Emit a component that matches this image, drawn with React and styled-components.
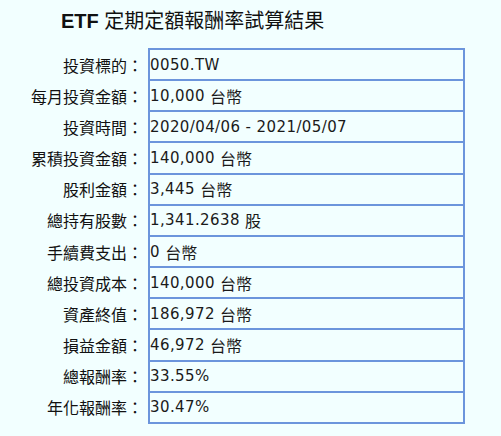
import React from "react";
import styled, { createGlobalStyle } from "styled-components";

const GlobalStyle = createGlobalStyle`
  body {
    margin: 0;
    background: #f2ffff;
    font-family: "DejaVu Sans", "Noto Sans CJK TC", sans-serif;
  }
`;

const Page = styled.div`
  width: 501px;
  height: 436px;
  background: #f2ffff;
  overflow: hidden;
`;

const Title = styled.h1`
  margin: 0;
  padding: 10px 0 0 61px;
  height: 48px;
  box-sizing: border-box;
  font-family: "Liberation Sans", "Noto Sans CJK TC", sans-serif;
  font-size: 20px;
  line-height: 22px;
  font-weight: normal;
  color: #111;

  & b {
    font-weight: bold;
  }
`;

const Rows = styled.div`
  display: flex;
  flex-direction: column;
`;

const Row = styled.div`
  display: grid;
  grid-template-columns: 148px 317px;
  align-items: stretch;
  height: 33.17px;
  & + & {
    margin-top: -2px;
  }
`;

const Label = styled.div`
  display: flex;
  align-items: center;
  justify-content: flex-end;
  padding-right: 5px;
  font-family: "Noto Sans CJK TC", sans-serif;
  font-size: 16px;
  color: #111;
  white-space: nowrap;
`;

const Value = styled.div`
  display: flex;
  align-items: center;
  box-sizing: border-box;
  border: 2px solid #6c95dc;
  padding-left: 0;
  font-family: "DejaVu Sans", "Noto Sans CJK TC", sans-serif;
  font-size: 15px;
  letter-spacing: 0.4px;
  color: #1a1a1a;
  white-space: nowrap;
`;

const Unit = styled.span`
  font-family: "Noto Sans CJK TC", sans-serif;
  font-size: 16px;
  letter-spacing: 0;
`;

const rows = [
  ["投資標的", "0050.TW"],
  ["每月投資金額", "10,000", "台幣"],
  ["投資時間", "2020/04/06 - 2021/05/07"],
  ["累積投資金額", "140,000", "台幣"],
  ["股利金額", "3,445", "台幣"],
  ["總持有股數", "1,341.2638", "股"],
  ["手續費支出", "0", "台幣"],
  ["總投資成本", "140,000", "台幣"],
  ["資產終值", "186,972", "台幣"],
  ["損益金額", "46,972", "台幣"],
  ["總報酬率", "33.55%"],
  ["年化報酬率", "30.47%"],
];

const App = () => {
  return (
    <>
      <GlobalStyle />
      <Page>
        <Title>
          <b>ETF</b> 定期定額報酬率試算結果
        </Title>
        <Rows>
          {rows.map(([label, value, unit]) => (
            <Row key={label}>
              <Label>{label}：</Label>
              <Value>
                {value}
                {unit ? <>&nbsp;<Unit>{unit}</Unit></> : null}
              </Value>
            </Row>
          ))}
        </Rows>
      </Page>
    </>
  );
};

export default App;
